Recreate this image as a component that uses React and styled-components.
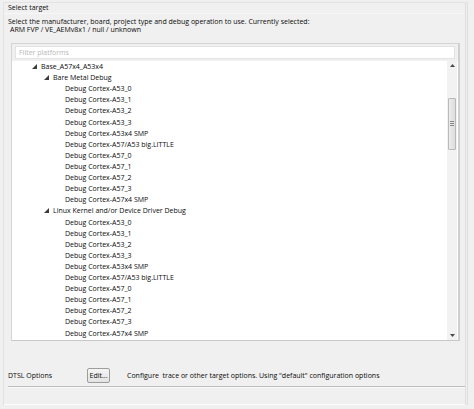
import React from 'react';
import styled, { createGlobalStyle } from 'styled-components';

const GlobalStyle = createGlobalStyle`
  html, body {
    margin: 0;
    padding: 0;
    background: #f0f0f0;
  }
  body {
    font-family: "Open Sans", "Noto Sans", Arial, sans-serif;
    font-size: 7px;
    color: #0a0a0a;
  }
`;

const debugTargets = [
  'Debug Cortex-A53_0',
  'Debug Cortex-A53_1',
  'Debug Cortex-A53_2',
  'Debug Cortex-A53_3',
  'Debug Cortex-A53x4 SMP',
  'Debug Cortex-A57/A53 big.LITTLE',
  'Debug Cortex-A57_0',
  'Debug Cortex-A57_1',
  'Debug Cortex-A57_2',
  'Debug Cortex-A57_3',
  'Debug Cortex-A57x4 SMP',
];

const rows = [
  { label: 'Base_A57x4_A53x4', level: 0, open: true },
  { label: 'Bare Metal Debug', level: 1, open: true },
  ...debugTargets.map((label) => ({ label, level: 2 })),
  { label: 'Linux Kernel and/or Device Driver Debug', level: 1, open: true },
  ...debugTargets.map((label) => ({ label, level: 2 })),
];

const Page = styled.div`
  width: 474px;
  height: 409px;
  box-sizing: border-box;
  padding: 2px 6px 0 3px;
`;

const Frame = styled.div`
  height: 403px;
  box-sizing: border-box;
  border: 1px solid #e2e2e2;
  border-bottom: none;
  border-right: 3px double #dedede;
  display: flex;
  flex-direction: column;
`;

const Heading = styled.div`
  padding: 0 0 0 4px;
  line-height: 9px;
  height: 10px;
  border-bottom: 1px solid #f7f7f7;
`;

const Intro = styled.div`
  padding: 4px 0 0 4px;
  line-height: 8px;
  span {
    display: block;
    padding-left: 2px;
  }
`;

const Panel = styled.div`
  margin: 9px 5px 0 7px;
  height: 299px;
  box-sizing: border-box;
  border: 1px solid #d4d4d4;
  border-right: 2px solid #cfcfcf;
  border-bottom: 1px solid #c8c8c8;
  display: flex;
  flex-direction: column;
`;

const Filter = styled.div`
  margin: 2px 3px 0 3px;
  height: 13px;
  box-sizing: border-box;
  border: 1px solid #e3e3e3;
  background: #fff;
  color: #b8b8b8;
  padding-left: 3px;
  line-height: 11px;
`;

const TreeArea = styled.div`
  flex: 1;
  display: flex;
  background: #fff;
  margin: 2px 0 0 0;
  min-height: 0;
`;

const Tree = styled.ul`
  flex: 1;
  list-style: none;
  margin: 0;
  padding: 0;
`;

const Row = styled.li`
  height: 11.12px;
  line-height: 11.12px;
  display: flex;
  align-items: center;
  padding-left: ${(p) => 18 + p.$level * 12}px;
  white-space: nowrap;
`;

const Twisty = styled.span`
  width: 8px;
  margin-right: 3px;
  display: inline-flex;
  justify-content: center;
  svg {
    display: block;
  }
`;

const Scrollbar = styled.div`
  width: 10px;
  margin-right: 1px;
  background: #f2f2f2;
  display: flex;
  flex-direction: column;
  align-items: center;
`;

const Arrow = styled.div`
  height: 10px;
  display: flex;
  align-items: center;
  justify-content: center;
`;

const Track = styled.div`
  flex: 1;
  width: 100%;
  padding-top: 27px;
  box-sizing: border-box;
`;

const Thumb = styled.div`
  height: 52px;
  margin: 0 1px;
  box-sizing: border-box;
  border: 1px solid #b9b9b9;
  border-radius: 1px;
  background: linear-gradient(to right, #ececec, #dcdcdc);
  display: flex;
  flex-direction: column;
  justify-content: center;
  align-items: center;
  gap: 1px;
  i {
    display: block;
    width: 4px;
    height: 1px;
    background: #8a8a8a;
  }
`;

const Options = styled.div`
  margin-top: 26px;
  padding: 0 0 0 4px;
  display: flex;
  align-items: center;
  height: 17px;
`;

const OptionLabel = styled.span`
  width: 79px;
`;

const EditButton = styled.button`
  font: inherit;
  color: inherit;
  height: 15px;
  width: 23px;
  padding: 0;
  box-sizing: border-box;
  border: 1px solid #9d9d9d;
  border-radius: 2px;
  background: linear-gradient(#f5f5f5, #e3e3e3);
  margin-right: 17px;
`;

const Divider = styled.div`
  margin: 2px 0 0 4px;
  border-top: 1px solid #bdbdbd;
  border-bottom: 1px solid #fafafa;
`;

const Footer = styled.div`
  margin-top: 16px;
  border-top: 1px solid #fbfbfb;
`;

const Triangle = () => (
  <svg width="5" height="5" viewBox="0 0 5 5">
    <path d="M5 0 L5 5 L0 5 Z" fill="#3c3c3c" />
  </svg>
);

const App = () => (
  <Page>
    <GlobalStyle />
    <Frame>
      <Heading>Select target</Heading>
      <Intro>
        Select the manufacturer, board, project type and debug operation to use. Currently selected:
        <span>ARM FVP / VE_AEMv8x1 / null / unknown</span>
      </Intro>
      <Panel>
        <Filter>Filter platforms</Filter>
        <TreeArea>
          <Tree>
            {rows.map((row, i) => (
              <Row key={i} $level={row.level}>
                <Twisty>{row.open && <Triangle />}</Twisty>
                {row.label}
              </Row>
            ))}
          </Tree>
          <Scrollbar>
            <Arrow>
              <svg width="5" height="3" viewBox="0 0 5 3">
                <path d="M0 3 L2.5 0 L5 3 Z" fill="#4a4a4a" />
              </svg>
            </Arrow>
            <Track>
              <Thumb>
                <i />
                <i />
                <i />
              </Thumb>
            </Track>
            <Arrow>
              <svg width="5" height="3" viewBox="0 0 5 3">
                <path d="M0 0 L5 0 L2.5 3 Z" fill="#4a4a4a" />
              </svg>
            </Arrow>
          </Scrollbar>
        </TreeArea>
      </Panel>
      <Options>
        <OptionLabel>DTSL Options</OptionLabel>
        <EditButton>Edit...</EditButton>
        <span>Configure&nbsp; trace or other target options. Using "default" configuration options</span>
      </Options>
      <Divider />
      <Footer />
    </Frame>
  </Page>
);

export default App;
